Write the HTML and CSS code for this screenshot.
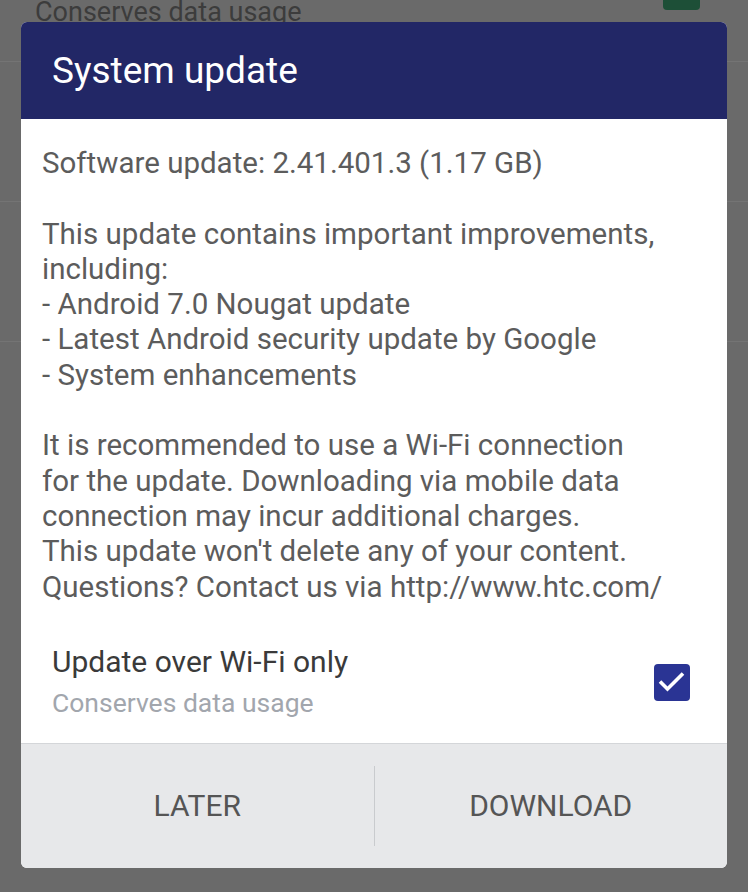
FILE: index.html
```html
<!DOCTYPE html>
<html lang="en">
    <head>
        <meta charset="UTF-8" />
        <meta name="viewport" content="width=device-width, initial-scale=1.0" />
        <title>System update</title>
        <link rel="stylesheet" href="styles.css">
    </head>
    <body>
        <!-- dimmed settings screen behind the dialog -->
        <div class="behind">
            <div class="row first">
                <span class="row-sub">Conserves data usage</span>
                <span class="row-check"></span>
            </div>
            <div class="row"></div>
            <div class="row"></div>
        </div>

        <div class="dialog">
            <div class="dialog-head">
                <h1 class="title">System update</h1>
            </div>
            <div class="dialog-body">
                <p class="info">Software update: 2.41.401.3 (1.17 GB)</p>
                <p class="info">This update contains important improvements, including:<br>
                    - Android 7.0 Nougat update<br>
                    - Latest Android security update by Google<br>
                    - System enhancements</p>
                <p class="info">It is recommended to use a Wi-Fi connection<br>
                    for the update. Downloading via mobile data<br>
                    connection may incur additional charges.<br>
                    This update won't delete any of your content.<br>
                    Questions? Contact us via http://www.htc.com/</p>
                <div class="option">
                    <div class="option-text">
                        <div class="option-title">Update over Wi-Fi only</div>
                        <div class="option-sub">Conserves data usage</div>
                    </div>
                    <div class="checkbox">
                        <svg width="36" height="37" viewBox="0 0 36 37">
                            <path d="M6 17.5 L13.5 25 L29 9.5" fill="none" stroke="#fff" stroke-width="3.6"/>
                        </svg>
                    </div>
                </div>
            </div>
            <div class="dialog-foot">
                <button class="btn">LATER</button>
                <span class="sep"></span>
                <button class="btn">DOWNLOAD</button>
            </div>
        </div>
    </body>
</html>
```

FILE: styles.css
```css
body {
    margin: 0;
    background: #6a6a6a;
    font-family: Roboto, "Noto Sans", sans-serif;
    height: 892px;
    overflow: hidden;
    position: relative;
}
.behind {
    display: flex;
    flex-direction: column;
}
.row {
    height: 139px;
    border-bottom: 1px solid #747474;
}
.row.first {
    height: 61px;
    display: flex;
    justify-content: space-between;
    padding: 0 48px 0 35px;
}
.row-sub {
    color: #3c3c3c;
    font-size: 27px;
    margin-top: -4px;
}
.row-check {
    width: 37px;
    height: 10px;
    background: #1d4f37;
    border-radius: 0 0 4px 4px;
}
.dialog {
    position: absolute;
    left: 21px;
    top: 22px;
    width: 706px;
    border-radius: 6px;
    overflow: hidden;
    background: #fff;
}
.dialog-head {
    height: 97px;
    background: #222766;
    display: flex;
    align-items: center;
    padding-left: 31px;
}
.title {
    margin: 0;
    color: #fff;
    font-size: 37px;
    font-weight: 400;
}
.dialog-body {
    padding: 27px 21px 19px 21px;
}
.info {
    margin: 0 0 35.3px 0;
    color: #5c5c5c;
    font-size: 29.5px;
    line-height: 35.3px;
    font-weight: 400;
}
.info:last-of-type {
    margin-bottom: 37px;
}
.option {
    display: flex;
    align-items: center;
    justify-content: space-between;
    padding: 0 16px 0 10px;
}
.option-title {
    color: #3a3a3a;
    font-size: 30px;
    line-height: 40px;
}
.option-sub {
    color: #a2a6ad;
    font-size: 26.5px;
    line-height: 42px;
}
.checkbox {
    width: 36px;
    height: 37px;
    background: #2a3494;
    border-radius: 4px;
    display: flex;
}
.dialog-foot {
    height: 124px;
    background: #e7e8ea;
    border-top: 1px solid #d4d6d9;
    display: flex;
    align-items: center;
}
.btn {
    flex: 1;
    height: 100%;
    border: none;
    background: none;
    font-family: Roboto, "Noto Sans", sans-serif;
    font-size: 30px;
    color: #555;
    padding: 0;
}
.sep {
    width: 1px;
    height: 80px;
    background: #c9cbce;
}
```
